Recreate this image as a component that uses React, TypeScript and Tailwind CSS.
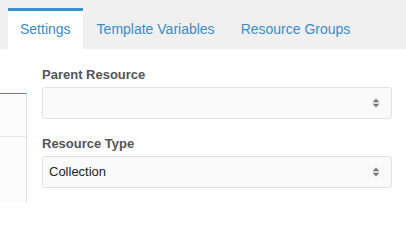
import React from 'react';

const tabs = ['Settings', 'Template Variables', 'Resource Groups'];

const SelectArrows: React.FC = () => (
  <svg width="8" height="10" viewBox="0 0 8 10" className="text-[#7a7a7a]">
    <path d="M0.5 4.2 L4 0.5 L7.5 4.2 Z" fill="currentColor" />
    <path d="M0.5 5.8 L7.5 5.8 L4 9.5 Z" fill="currentColor" />
  </svg>
);

const SelectField: React.FC<{ label: string; value?: string }> = ({ label, value }) => (
  <div className="flex flex-col">
    <label className="text-[13px] leading-[16px] font-bold text-[#555555]">{label}</label>
    <div className="mt-1 h-[32px] flex items-center justify-between pl-[6px] pr-[11px] bg-[#fafafa] border border-[#e2e2e2] rounded-[3px]">
      <span className="text-[13px] text-[#222222]">{value}</span>
      <SelectArrows />
    </div>
  </div>
);

export default function App() {
  return (
    <div className="w-[406px] h-[202px] overflow-hidden bg-white flex flex-col font-['Liberation_Sans',Arial,sans-serif]">
      <div className="h-[49px] shrink-0 bg-[#f0f0f0] flex items-end pl-2 gap-[2px]">
        {tabs.map((t, i) => (
          <div
            key={t}
            className={
              i === 0
                ? 'h-[41px] px-3 pt-[10px] border-t-[3px] border-[#3592cc] bg-white text-[14px] leading-[16px] text-[#3a8cc6]'
                : 'h-[41px] px-3 pt-[10px] border-t-[3px] border-transparent text-[14px] leading-[16px] text-[#3a8cc6]'
            }
          >
            {t}
          </div>
        ))}
      </div>
      <div className="flex flex-1">
        <div className="w-[27px] shrink-0 mt-[44px] border-t border-[#3a8cc6] border-r border-r-[#e0e0e0] bg-[#fcfcfc]">
          <div className="h-[43px] border-b border-[#e6e6e6]" />
        </div>
        <div className="ml-[15px] w-[350px] pt-[18px] flex flex-col gap-[17px]">
          <SelectField label="Parent Resource" />
          <SelectField label="Resource Type" value="Collection" />
        </div>
      </div>
    </div>
  );
}
